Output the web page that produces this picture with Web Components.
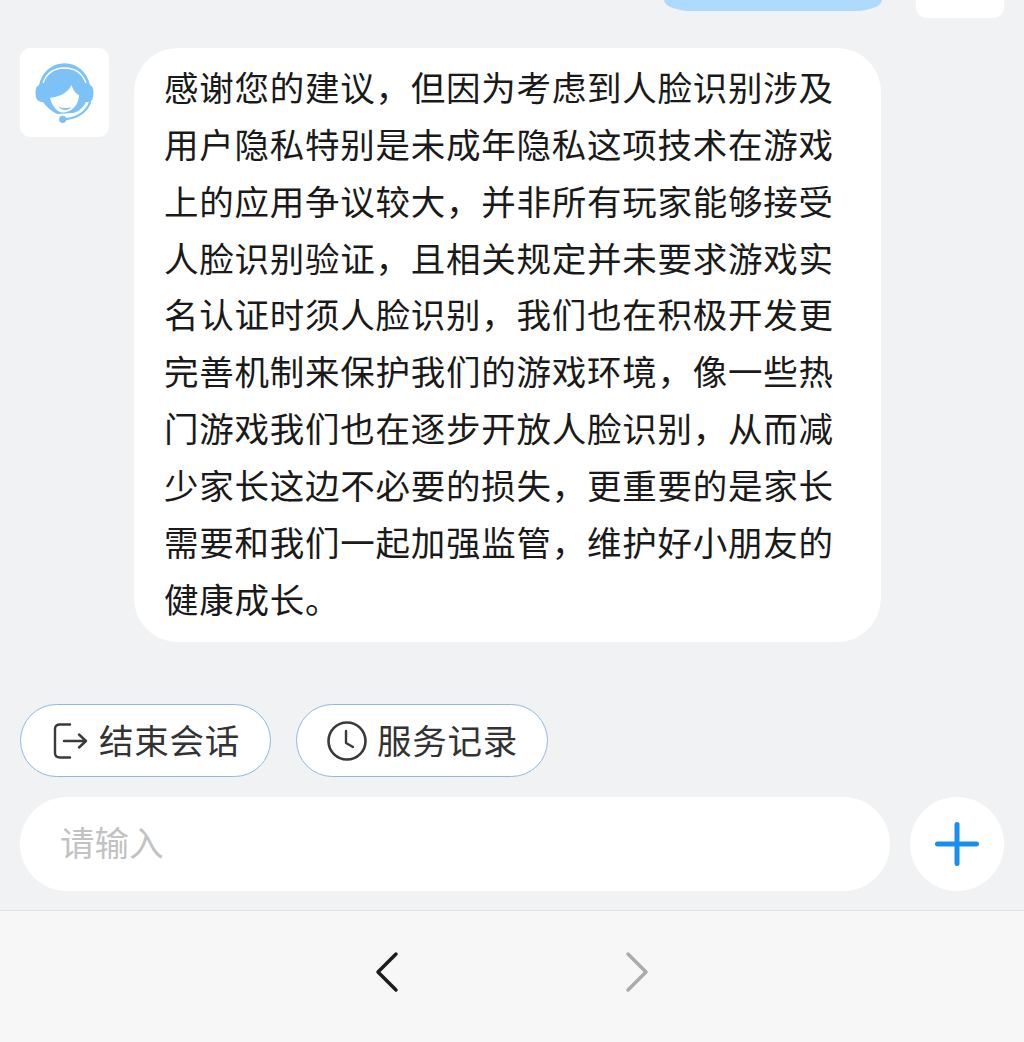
<!DOCTYPE html>
<html lang="zh-CN"><head><meta charset="utf-8"><title>客服会话</title>
<style>
html,body{margin:0;padding:0;height:1042px;overflow:hidden;background:#f1f2f4}
body{font-family:"Noto Sans CJK SC","Noto Sans",sans-serif}
</style></head><body>
<chat-page>
  <user-stub></user-stub>
  <agent-message>感谢您的建议，但因为考虑到人脸识别涉及用户隐私特别是未成年隐私这项技术在游戏上的应用争议较大，并非所有玩家能够接受人脸识别验证，且相关规定并未要求游戏实名认证时须人脸识别，我们也在积极开发更完善机制来保护我们的游戏环境，像一些热门游戏我们也在逐步开放人脸识别，从而减少家长这边不必要的损失，更重要的是家长需要和我们一起加强监管，维护好小朋友的健康成长。</agent-message>
  <action-row>
    <pill-button icon="exit" style="width:251px">结束会话</pill-button>
    <pill-button icon="clock" style="width:252px">服务记录</pill-button>
  </action-row>
  <input-row></input-row>
  <nav-bar></nav-bar>
</chat-page>
<script>
function def(name, html){
  customElements.define(name, class extends HTMLElement{
    constructor(){super();this.attachShadow({mode:'open'}).innerHTML=typeof html==='function'?html(this):html;}
  });
}
def('chat-page',`<style>:host{display:flex;flex-direction:column;width:1024px;height:1042px;overflow:hidden}</style><slot></slot>`);
def('user-stub',`<style>
:host{display:flex;justify-content:flex-end;align-items:flex-start;height:18px;padding-right:20px;gap:34px}
.b{width:218px;height:11px;background:#aedafe;border-radius:0 0 28px 28px / 0 0 11px 11px}
.a{width:88px;height:18px;background:#fff;border-radius:0 0 10px 10px}
</style><div class="b"></div><div class="a"></div>`);
def('agent-message',`<style>
:host{display:flex;gap:25px;margin:30px 0 0 20px;align-items:flex-start}
.av{width:89px;height:89px;background:#fff;border-radius:10px;flex:none}
.bub{width:747px;height:594px;box-sizing:border-box;background:#fff;border-radius:44px;padding:10px 30px 0;font-size:34.5px;letter-spacing:.75px;line-height:56.85px;color:#1a1a1a}
svg{display:block}
</style>
<div class="av"><svg width="89" height="89" viewBox="0 0 89 89">
<path fill="#7cc2f7" d="M19 37 C22 24 32 15.300 44.500 15.300 C57 15.300 67 24 70 37 Q73.500 38 73.500 45 Q73.500 54 68 54 L66 54 C63 60 58 64 53 65 L37 66 C31 63 26 58 23 54 L21 54 Q15.500 53 15.500 45 Q15.500 38 19 37 Z"/>
<path fill="#fff" d="M30 50 C36 49 47 47 51.500 37 C53 42 56 46 59 47 C59 53 56 59 51 62 C46 65 41 65 38 63 C34 60 31 55 30 50 Z"/>
<path fill="none" stroke="#fff" stroke-width="1.300" d="M23 35 C27 24 36 20 44.500 20 C53 20 62 24 66 35"/>
<path fill="#7cc2f7" d="M38.500 58.500 C42 60.500 48 60.500 51.500 59 C49 63 41 63 38.500 58.500 Z"/>
<path fill="none" stroke="#7cc2f7" stroke-width="2.200" stroke-linecap="round" d="M70 54 C67 64 57 70 45 71.300"/>
<circle cx="42.700" cy="71.300" r="3.600" fill="#7cc2f7"/>
</svg></div>
<div class="bub"><slot></slot></div>`);
def('action-row',`<style>:host{display:flex;gap:25px;margin:62px 0 0 20px}</style><slot></slot>`);
const icons={
exit:`<svg width="36" height="38" viewBox="0 0 36 38" fill="none" stroke="#3a3a3a" stroke-width="2.400" stroke-linecap="round" stroke-linejoin="round"><path d="M18 2.500 H8 Q3 2.500 3 7 V31 Q3 35.500 8 35.500 H18"/><path d="M12 19 H34 M27 12.500 L34 19 L27 25.500"/></svg>`,
clock:`<svg width="40" height="40" viewBox="0 0 40 40" fill="none" stroke="#3a3a3a" stroke-linecap="round" stroke-linejoin="round"><circle cx="20" cy="20" r="18.500" stroke-width="2.600"/><path d="M19 10 V22 L26 26" stroke-width="2.400"/></svg>`};
def('pill-button',el=>{const ex=el.getAttribute('icon')==='exit';return `<style>
:host{display:block}
.p{box-sizing:border-box;height:73px;background:#fff;border:1px solid #8fb9e2;border-radius:37px;display:flex;align-items:center;padding-left:${ex?31:30}px;gap:${ex?11:10}px;font-size:34.5px;letter-spacing:.75px;color:#333}
span{position:relative;top:-2px}
svg{display:block;flex:none}
</style><div class="p">${icons[el.getAttribute('icon')]}<span><slot></slot></span></div>`});
def('input-row',`<style>
:host{display:flex;gap:20px;margin:20px 20px 0}
.i{flex:1;height:94px;background:#fff;border-radius:47px;display:flex;align-items:center;padding-left:40px;font-size:34.5px;letter-spacing:0;color:#c2c2c2}
.t{position:relative;top:-3px}
.c{width:94px;height:94px;border-radius:50%;background:#fff;display:flex;align-items:center;justify-content:center;flex:none}
svg{display:block}
</style><div class="i"><span class="t">请输入</span></div><div class="c"><svg width="46" height="46" viewBox="0 0 46 46"><path d="M23 3.500 V42.500 M3.500 23 H42.500" stroke="#1a8eee" stroke-width="5" stroke-linecap="round"/></svg></div>`);
def('nav-bar',`<style>
:host{display:flex;box-sizing:border-box;margin-top:19px;flex:1;background:#f7f7f7;border-top:1px solid #dfe1e4;padding-top:39px;justify-content:center;align-items:flex-start;gap:224px}
svg{display:block}
</style><svg width="26" height="44" viewBox="0 0 26 44" fill="none" stroke-width="3.500" stroke-linecap="round" stroke-linejoin="round" stroke="#1c1c1c"><path d="M22 4 L4 22 L22 40"/></svg>
<svg width="26" height="44" viewBox="0 0 26 44" fill="none" stroke-width="3.500" stroke-linecap="round" stroke-linejoin="round" stroke="#ababab"><path d="M4 4 L22 22 L4 40"/></svg>`);
</script>
</body></html>
